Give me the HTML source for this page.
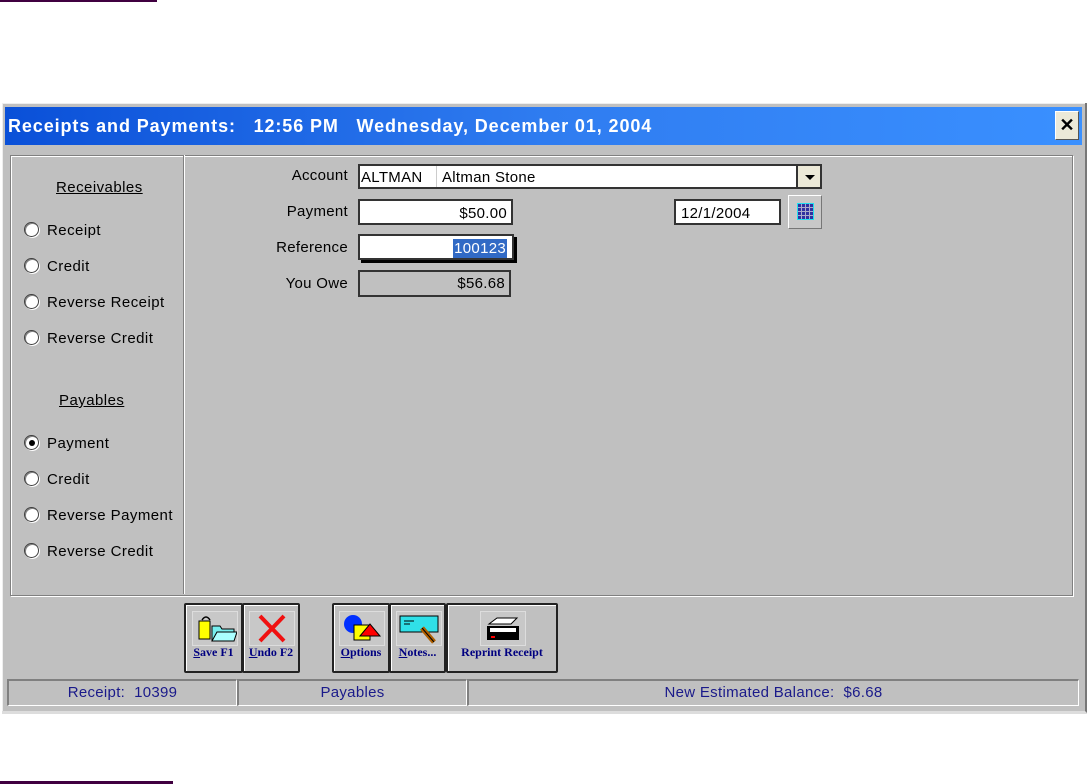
<!DOCTYPE html>
<html><head><style>
body{margin:0;width:1087px;height:784px;background:#fff;position:relative;overflow:hidden;font-family:"Liberation Sans",Arial,sans-serif;}
.a{position:absolute;}
.t{font-size:15px;color:#000;letter-spacing:0.45px;}
.rad{position:absolute;width:13px;height:13px;border-radius:50%;background:#fff;border:1px solid #404040;box-shadow:inset 1px 1px 0 #808080, 1px 1px 0 #fff;}
.lbl{position:absolute;font-size:15px;right:739px;text-align:right;letter-spacing:0.3px;}
.box{position:absolute;background:#fff;border:1px solid #000;box-sizing:border-box;font-size:15px;letter-spacing:0.3px;}
.btn{position:absolute;top:603px;height:70px;border:2px solid #222;box-sizing:border-box;background:#c0c0c0;border-radius:2px;box-shadow:inset 1px 1px 0 #fff;}
.btn .cap{position:absolute;bottom:11px;left:0;right:0;text-align:center;font-family:"Liberation Serif",serif;font-weight:bold;font-size:12px;color:#000080;}
.btn .ic{position:absolute;top:6px;left:50%;margin-left:-22px;width:44px;height:33px;background:#c8c8c8;border:1px solid #ddd;}
.sp{position:absolute;top:679px;height:27px;box-sizing:border-box;border-top:2px solid #808080;border-left:2px solid #808080;border-bottom:1px solid #fff;border-right:1px solid #fff;color:#1a1a8a;font-size:15px;text-align:center;line-height:24px;letter-spacing:0.3px;}
</style></head><body>
<div class="a" style="left:0;top:0;width:157px;height:2px;background:#400040"></div>
<div class="a" style="left:0;top:781px;width:173px;height:3px;background:#400040"></div>

<div class="a" style="left:2px;top:103px;width:1083px;height:608px;background:#c0c0c0;border-right:3px solid #777;border-bottom:3px solid #ddd;box-shadow:inset 1px 1px 0 #eee;"></div>
<div class="a" style="left:5px;top:107px;width:1077px;height:38px;background:linear-gradient(90deg,#0a50d8,#2f7cf0 50%,#3a90ff);"></div>
<div class="a" style="left:8px;top:116px;color:#fff;font-weight:bold;font-size:18px;letter-spacing:0.9px;white-space:pre;">Receipts and Payments:   12:56 PM   Wednesday, December 01, 2004</div>
<div class="a" style="left:1055px;top:111px;width:24px;height:29px;background:#ece9d8;border:1px solid #fff;border-right-color:#555;border-bottom-color:#555;box-sizing:border-box;text-align:center;font-weight:bold;font-size:18px;line-height:27px;">✕</div>

<div class="a" style="left:10px;top:155px;width:1061px;height:439px;border:1px solid #808080;box-shadow:1px 1px 0 #fff, inset 1px 1px 0 #fff;"></div>
<div class="a" style="left:183px;top:155px;width:1px;height:439px;background:#808080;box-shadow:1px 0 0 #fff"></div>

<div class="a t" style="left:56px;top:179px;text-decoration:underline;">Receivables</div>
<div class="rad" style="left:24px;top:222px"></div><div class="a t" style="left:47px;top:222px">Receipt</div>
<div class="rad" style="left:24px;top:258px"></div><div class="a t" style="left:47px;top:258px">Credit</div>
<div class="rad" style="left:24px;top:294px"></div><div class="a t" style="left:47px;top:294px">Reverse Receipt</div>
<div class="rad" style="left:24px;top:330px"></div><div class="a t" style="left:47px;top:330px">Reverse Credit</div>
<div class="a t" style="left:59px;top:392px;text-decoration:underline;">Payables</div>
<div class="rad" style="left:24px;top:435px"><div style="position:absolute;left:3.5px;top:3.5px;width:6px;height:6px;border-radius:50%;background:#000"></div></div><div class="a t" style="left:47px;top:435px">Payment</div>
<div class="rad" style="left:24px;top:471px"></div><div class="a t" style="left:47px;top:471px">Credit</div>
<div class="rad" style="left:24px;top:507px"></div><div class="a t" style="left:47px;top:507px">Reverse Payment</div>
<div class="rad" style="left:24px;top:543px"></div><div class="a t" style="left:47px;top:543px">Reverse Credit</div>

<div class="lbl" style="top:167px">Account</div>
<div class="lbl" style="top:203px">Payment</div>
<div class="lbl" style="top:239px">Reference</div>
<div class="lbl" style="top:275px">You Owe</div>

<div class="box" style="left:358px;top:164px;width:464px;height:25px;border:2px solid #333;">
 <span class="a" style="left:1px;top:3px">ALTMAN</span>
 <div class="a" style="left:76px;top:0;width:1px;height:21px;background:#ccc"></div>
 <span class="a" style="left:82px;top:3px">Altman Stone</span>
 <div class="a" style="left:436px;top:0;width:24px;height:21px;background:#ece9d8;border-left:2px solid #333;box-sizing:border-box;"><div style="position:absolute;left:7px;top:9px;width:0;height:0;border-left:5px solid transparent;border-right:5px solid transparent;border-top:5px solid #000"></div></div>
</div>
<div class="box" style="left:358px;top:199px;width:155px;height:26px;border:2px solid #333;text-align:right;padding:4px 4px 0 0;">$50.00</div>
<div class="box" style="left:674px;top:199px;width:107px;height:26px;border:2px solid #333;padding:4px 0 0 5px;">12/1/2004</div>
<div class="a" style="left:788px;top:195px;width:34px;height:34px;background:#c8c8c8;border:1px solid #fff;border-right-color:#777;border-bottom-color:#777;box-sizing:border-box;">
 <div style="position:absolute;left:8px;top:7px;width:15px;height:15px;background:#3030a0;border:1px solid #20e0f0;background-image:linear-gradient(90deg,transparent 3px,#aac 3px,#aac 4px,transparent 4px,transparent 7px,#aac 7px,#aac 8px,transparent 8px,transparent 11px,#aac 11px,#aac 12px,transparent 12px),linear-gradient(0deg,transparent 3px,#aac 3px,#aac 4px,transparent 4px,transparent 7px,#aac 7px,#aac 8px,transparent 8px,transparent 11px,#aac 11px,#aac 12px,transparent 12px);"></div>
</div>
<div class="box" style="left:358px;top:234px;width:156px;height:26px;border:2px solid #333;box-shadow:3px 3px 0 #000;">
 <span class="a" style="right:5px;top:3px;background:#316ac5;color:#fff;padding:1px 1px;">100123</span>
</div>
<div class="box" style="left:358px;top:270px;width:153px;height:27px;background:#c0c0c0;border:2px solid #333;text-align:right;padding:3px 4px 0 0;">$56.68</div>

<div class="btn" style="left:184px;width:59px;"><div class="ic"><svg width="44" height="33"><rect x="6" y="9" width="11" height="18" fill="#ff0" stroke="#000"/><path d="M9 8 q4 -6 8 0" fill="none" stroke="#000" stroke-width="1.5"/><path d="M19 14 h8 l2 3 h12 v12 h-22z" fill="#7ee" stroke="#000"/><path d="M19 29 l5 -9 h20 l-3 9z" fill="#aff" stroke="#000"/></svg></div><div class="cap"><u>S</u>ave F1</div></div>
<div class="btn" style="left:242px;width:58px;"><div class="ic"><svg width="44" height="33"><path d="M10 4 L34 29 M34 4 L10 29" stroke="#f01010" stroke-width="4"/></svg></div><div class="cap"><u>U</u>ndo F2</div></div>
<div class="btn" style="left:332px;width:58px;"><div class="ic"><svg width="44" height="33"><circle cx="13" cy="12" r="9" fill="#0030ff"/><rect x="14" y="13" width="16" height="15" fill="#ff0" stroke="#000"/><path d="M20 24 l10 -12 l10 12z" fill="#f00" stroke="#000"/></svg></div><div class="cap"><u>O</u>ptions</div></div>
<div class="btn" style="left:389px;width:57px;"><div class="ic"><svg width="44" height="33"><rect x="3" y="4" width="38" height="16" fill="#30e0e8" stroke="#000"/><path d="M7 9 h10 M7 12 h6" stroke="#000"/><path d="M25 16 l12 14" stroke="#b06000" stroke-width="5"/><path d="M25 16 l12 14" stroke="#000" stroke-width="1"/></svg></div><div class="cap"><u>N</u>otes...</div></div>
<div class="btn" style="left:446px;width:112px;"><div class="ic"><svg width="44" height="33"><path d="M8 12 h22 l6 -6 h-20z" fill="#fff" stroke="#000"/><rect x="6" y="14" width="32" height="14" fill="#000"/><rect x="9" y="16" width="26" height="4" fill="#fff"/><rect x="10" y="24" width="4" height="2" fill="#f00"/></svg></div><div class="cap">Reprint Receipt</div></div>

<div class="sp" style="left:7px;width:230px;">Receipt:&nbsp; 10399</div>
<div class="sp" style="left:237px;width:230px;">Payables</div>
<div class="sp" style="left:467px;width:612px;">New Estimated Balance:&nbsp; $6.68</div>
</body></html>
